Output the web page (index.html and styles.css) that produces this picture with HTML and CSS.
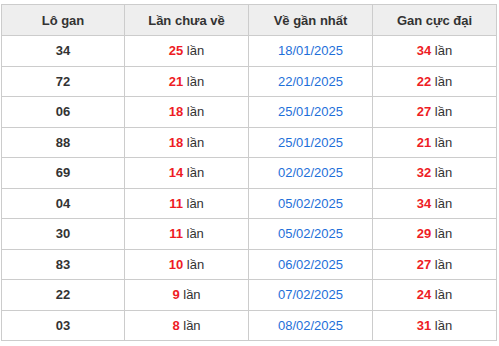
FILE: index.html
```html
<!DOCTYPE html>
<html lang="vi">
	<head>
		<meta charset="UTF-8" />
		<meta name="viewport" content="width=device-width, initial-scale=1.0" />
		<link rel="stylesheet" href="styles.css">
		<title>Lô gan</title>
	</head>
	<body>
		<table class="gan_table">
			<thead>
				<tr>
					<th>Lô gan</th>
					<th>Lần chưa về</th>
					<th>Về gần nhất</th>
					<th>Gan cực đại</th>
				</tr>
			</thead>
			<tbody>
				<tr><td class="num">34</td><td><b class="red">25</b> lần</td><td class="date">18/01/2025</td><td><b class="red">34</b> lần</td></tr>
				<tr><td class="num">72</td><td><b class="red">21</b> lần</td><td class="date">22/01/2025</td><td><b class="red">22</b> lần</td></tr>
				<tr><td class="num">06</td><td><b class="red">18</b> lần</td><td class="date">25/01/2025</td><td><b class="red">27</b> lần</td></tr>
				<tr><td class="num">88</td><td><b class="red">18</b> lần</td><td class="date">25/01/2025</td><td><b class="red">21</b> lần</td></tr>
				<tr><td class="num">69</td><td><b class="red">14</b> lần</td><td class="date">02/02/2025</td><td><b class="red">32</b> lần</td></tr>
				<tr><td class="num">04</td><td><b class="red">11</b> lần</td><td class="date">05/02/2025</td><td><b class="red">34</b> lần</td></tr>
				<tr><td class="num">30</td><td><b class="red">11</b> lần</td><td class="date">05/02/2025</td><td><b class="red">29</b> lần</td></tr>
				<tr><td class="num">83</td><td><b class="red">10</b> lần</td><td class="date">06/02/2025</td><td><b class="red">27</b> lần</td></tr>
				<tr><td class="num">22</td><td><b class="red">9</b> lần</td><td class="date">07/02/2025</td><td><b class="red">24</b> lần</td></tr>
				<tr><td class="num">03</td><td><b class="red">8</b> lần</td><td class="date">08/02/2025</td><td><b class="red">31</b> lần</td></tr>
			</tbody>
		</table>
	</body>
</html>
```

FILE: styles.css
```css
* {
	margin: 0;
	padding: 0;
	box-sizing: border-box;
}
body {
	background: #fff;
	padding: 4px 0 0 1px;
	font-family: "Liberation Sans", Arial, sans-serif;
	font-size: 13px;
	color: #333;
}
.gan_table {
	width: 496px;
	border-collapse: collapse;
	table-layout: fixed;
}
.gan_table th,
.gan_table td {
	border: 1px solid #ccc;
	text-align: center;
	vertical-align: middle;
}
.gan_table th {
	height: 31px;
	background-color: #eee;
	font-weight: bold;
	color: #333;
}
.gan_table th:first-child {
	width: 123px;
}
.gan_table td {
	height: 30.5px;
}
.num {
	font-weight: bold;
}
.red {
	color: #ee1c25;
}
.date {
	color: #1e6fd9;
}
```
